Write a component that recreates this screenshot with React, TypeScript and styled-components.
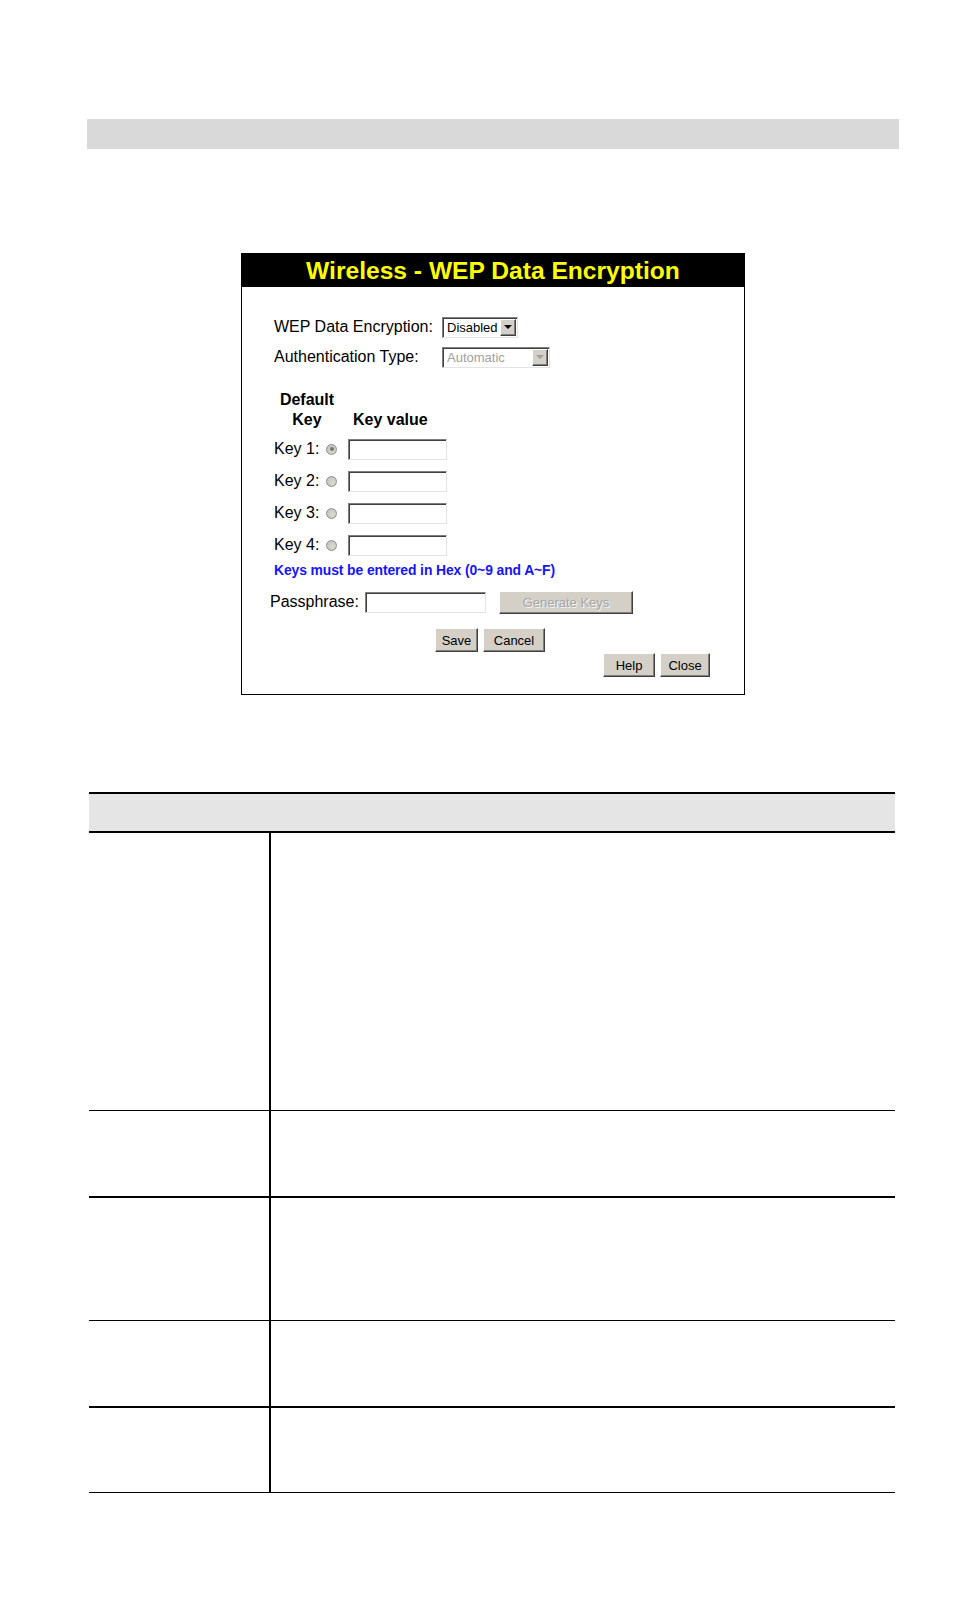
import React from "react";
import styled, { createGlobalStyle } from "styled-components";

const GlobalStyle = createGlobalStyle`
    html, body {
        margin: 0;
        padding: 0;
        background: #ffffff;
    }
    body {
        font-family: "Liberation Sans", Arial, sans-serif;
        color: #000;
    }
`;

const Page = styled.div`
    width: 954px;
    min-height: 1612px;
    padding-top: 119px;
    box-sizing: border-box;
`;

const TopBar = styled.div`
    margin-left: 87px;
    width: 812px;
    height: 30px;
    background: #d9d9d9;
`;

const Dialog = styled.div`
    margin: 104px 0 0 241px;
    width: 504px;
    box-sizing: border-box;
    border: 1px solid #000;
    background: #fff;
`;

const DialogTitle = styled.div`
    height: 33px;
    background: #000;
    color: #ffff00;
    font-size: 24.6px;
    font-weight: bold;
    line-height: 33px;
    text-align: center;
`;

const DialogBody = styled.div`
    display: flex;
    flex-direction: column;
    padding: 25px 0 17px 0;
`;

const FieldRow = styled.div`
    display: flex;
    align-items: center;
    height: 30px;
    padding-left: 32px;
`;

const FieldLabel = styled.span`
    width: 168px;
    font-size: 16px;
`;

const SelectBox = styled.div<{ w: number; disabled?: boolean }>`
    display: flex;
    align-items: center;
    justify-content: space-between;
    width: ${(p) => p.w}px;
    height: 21px;
    box-sizing: border-box;
    border: 1px solid;
    border-color: #808080 #e4e4e4 #e4e4e4 #808080;
    box-shadow: inset 1px 1px 0 #404040;
    background: #fff;
    padding: 0 1px 0 4px;
    font-size: 13px;
    color: ${(p) => (p.disabled ? "#a0a0a0" : "#000")};
`;

const SelectArrow = styled.span<{ disabled?: boolean }>`
    display: flex;
    align-items: center;
    justify-content: center;
    width: 16px;
    height: 17px;
    box-sizing: border-box;
    background: #d4d0c8;
    border: 1px solid;
    border-color: #fff #404040 #404040 #fff;
    box-shadow: inset -1px -1px 0 #808080;

    &::after {
        content: "";
        border-left: 4px solid transparent;
        border-right: 4px solid transparent;
        border-top: 4px solid ${(p) => (p.disabled ? "#a0a0a0" : "#000")};
    }
`;

const KeyHead = styled.div`
    display: flex;
    align-items: flex-end;
    margin-top: 18px;
    padding-left: 32px;
    font-size: 16px;
    font-weight: bold;
    line-height: 20px;
`;

const KeyHeadDefault = styled.div`
    width: 66px;
    text-align: center;
`;

const KeyHeadValue = styled.div`
    padding-left: 13px;
`;

const KeyList = styled.div`
    display: flex;
    flex-direction: column;
    margin-top: 3px;
`;

const KeyRow = styled.div`
    display: flex;
    align-items: center;
    height: 32px;
    padding-left: 32px;
`;

const KeyLabel = styled.span`
    width: 52px;
    font-size: 16px;
`;

const Radio = styled.span<{ checked?: boolean }>`
    position: relative;
    width: 11px;
    height: 11px;
    box-sizing: border-box;
    border-radius: 50%;
    border: 1px solid #8e8e8e;
    background: radial-gradient(circle at 60% 60%, #dedbd4 0%, #bebab2 100%);
    margin-right: 11px;

    &::after {
        content: "";
        display: ${(p) => (p.checked ? "block" : "none")};
        position: absolute;
        left: 2.5px;
        top: 2.5px;
        width: 4px;
        height: 4px;
        border-radius: 50%;
        background: #747474;
    }
`;

const TextInput = styled.div<{ w: number }>`
    width: ${(p) => p.w}px;
    height: 21px;
    box-sizing: border-box;
    border: 1px solid;
    border-color: #808080 #e4e4e4 #e4e4e4 #808080;
    box-shadow: inset 1px 1px 0 #404040;
    background: #fff;
`;

const Note = styled.div`
    height: 18px;
    line-height: 18px;
    padding-left: 32px;
    font-size: 13.9px;
    font-weight: bold;
    color: #1414ff;
    letter-spacing: -0.1px;
`;

const PassRow = styled.div`
    display: flex;
    align-items: center;
    height: 30px;
    margin-top: 8px;
    padding-left: 28px;
`;

const PassLabel = styled.span`
    font-size: 16px;
    margin-right: 6px;
`;

const ButtonRow = styled.div<{ align: "center" | "flex-end"; top: number }>`
    display: flex;
    justify-content: ${(p) => p.align};
    gap: 5px;
    margin-top: ${(p) => p.top}px;
    padding-right: ${(p) => (p.align === "center" ? 6 : 34)}px;
`;

const Button = styled.div<{ w: number; h?: number; disabled?: boolean }>`
    display: flex;
    align-items: center;
    justify-content: center;
    width: ${(p) => p.w}px;
    height: ${(p) => p.h ?? 24}px;
    box-sizing: border-box;
    background: #d4d0c8;
    border: 1px solid;
    border-color: #fff #404040 #404040 #fff;
    box-shadow: inset -1px -1px 0 #808080;
    font-size: 13px;
    color: ${(p) => (p.disabled ? "#a6a6a6" : "#000")};
    text-shadow: ${(p) => (p.disabled ? "1px 1px 0 #f4f4f4" : "none")};
`;

const GenerateButton = styled(Button)`
    margin-left: 13px;
`;

const Table = styled.div`
    margin: 97px 0 0 89px;
    width: 806px;
    border-top: 2px solid #000;
`;

const TableHead = styled.div`
    height: 37px;
    background: #e5e5e5;
    border-bottom: 2px solid #000;
`;

const TableRow = styled.div<{ h: number; line: number }>`
    display: grid;
    grid-template-columns: 182px 1fr;
    height: ${(p) => p.h}px;
    border-bottom: ${(p) => p.line}px solid #000;
`;

const NameCell = styled.div`
    border-right: 2px solid #000;
`;

const rows = [
    { h: 277, line: 1 },
    { h: 85, line: 2 },
    { h: 122, line: 1 },
    { h: 85, line: 2 },
    { h: 84, line: 1 },
];

const keys = [1, 2, 3, 4];

export default function App() {
    return (
        <Page>
            <GlobalStyle />
            <TopBar />
            <Dialog>
                <DialogTitle>Wireless - WEP Data Encryption</DialogTitle>
                <DialogBody>
                    <FieldRow>
                        <FieldLabel>WEP Data Encryption:</FieldLabel>
                        <SelectBox w={76}>
                            Disabled
                            <SelectArrow />
                        </SelectBox>
                    </FieldRow>
                    <FieldRow>
                        <FieldLabel>Authentication Type:</FieldLabel>
                        <SelectBox w={108} disabled>
                            Automatic
                            <SelectArrow disabled />
                        </SelectBox>
                    </FieldRow>
                    <KeyHead>
                        <KeyHeadDefault>
                            Default
                            <br />
                            Key
                        </KeyHeadDefault>
                        <KeyHeadValue>Key value</KeyHeadValue>
                    </KeyHead>
                    <KeyList>
                        {keys.map((k) => (
                            <KeyRow key={k}>
                                <KeyLabel>Key {k}:</KeyLabel>
                                <Radio checked={k === 1} />
                                <TextInput w={99} />
                            </KeyRow>
                        ))}
                    </KeyList>
                    <Note>Keys must be entered in Hex (0~9 and A~F)</Note>
                    <PassRow>
                        <PassLabel>Passphrase:</PassLabel>
                        <TextInput w={121} />
                        <GenerateButton w={134} h={23} disabled>
                            Generate Keys
                        </GenerateButton>
                    </PassRow>
                    <ButtonRow align="center" top={11}>
                        <Button w={43}>Save</Button>
                        <Button w={62}>Cancel</Button>
                    </ButtonRow>
                    <ButtonRow align="flex-end" top={1}>
                        <Button w={52}>Help</Button>
                        <Button w={50}>Close</Button>
                    </ButtonRow>
                </DialogBody>
            </Dialog>
            <Table>
                <TableHead />
                {rows.map((r, i) => (
                    <TableRow key={i} h={r.h} line={r.line}>
                        <NameCell />
                        <div />
                    </TableRow>
                ))}
            </Table>
        </Page>
    );
}
